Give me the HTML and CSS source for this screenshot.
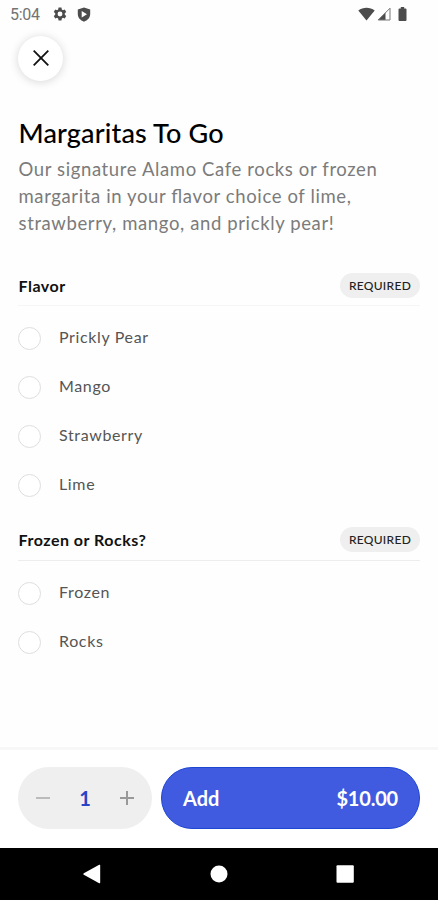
FILE: index.html
```html
<!DOCTYPE html>
<html lang="en">
<head>
<meta charset="utf-8">
<title>Margaritas To Go</title>
<link rel="stylesheet" href="styles.css">
</head>
<body>
<div class="screen">
  <header class="status">
    <span class="time">5:04</span>
    <svg class="gear" width="14" height="14" viewBox="0 0 24 24"><path fill-rule="evenodd" d="M9.500 1h5l.6 3.200 2 1.200 3.100-1.100 2.500 4.300-2.500 2.100v2.600l2.500 2.100-2.500 4.300-3.100-1.100-2 1.200-.6 3.200h-5l-.6-3.200-2-1.200-3.100 1.100-2.500-4.300 2.500-2.100v-2.600L1.300 8.600l2.500-4.300 3.100 1.100 2-1.200zM12 7.800a4.200 4.200 0 1 0 0 8.400 4.200 4.200 0 0 0 0-8.400z"/></svg>
    <svg class="shield" width="14" height="15" viewBox="0 0 14 15"><path fill-rule="evenodd" d="M7 .4 13.200 2.500V7c0 3.600-2.500 6.300-6.200 7.700C3.300 13.300.800 10.600.800 7V2.500zM4.700 4v6.400L10 7.200z"/></svg>
    <span class="spacer"></span>
    <svg class="wifi" width="17" height="14" viewBox="0 0 17 14"><path d="M.3 3.500C5-.2 12-.2 16.700 3.500L8.500 13.500z"/></svg>
    <svg class="signal" width="14" height="14" viewBox="0 0 14 14"><path d="M8.500 5.500V13H.8z"/><path class="thin" d="M1.200 13 13 1.200V13z"/></svg>
    <svg class="battery" width="9" height="14" viewBox="0 0 9 14"><path d="M2.800 0h3.400v1.500h1.300q1 0 1 1V13q0 1-1 1h-6q-1 0-1-1V2.500q0-1 1-1h1.300z"/></svg>
  </header>
  <main>
    <button class="close" aria-label="Close"><svg width="18" height="18" viewBox="0 0 18 18"><path d="M1.700 1.700 16.300 16.300M16.300 1.700 1.700 16.300"/></svg></button>
    <h1>Margaritas To Go</h1>
    <p class="desc">Our signature Alamo Cafe rocks or frozen<br>margarita in your flavor choice of lime,<br>strawberry, mango, and prickly pear!</p>
    <section>
      <div class="head faint"><h2>Flavor</h2><span class="tag">REQUIRED</span></div>
      <ul>
        <li><i class="radio"></i><span>Prickly Pear</span></li>
        <li><i class="radio"></i><span>Mango</span></li>
        <li><i class="radio"></i><span>Strawberry</span></li>
        <li><i class="radio"></i><span>Lime</span></li>
      </ul>
    </section>
    <section>
      <div class="head"><h2>Frozen or Rocks?</h2><span class="tag">REQUIRED</span></div>
      <ul>
        <li><i class="radio"></i><span>Frozen</span></li>
        <li><i class="radio"></i><span>Rocks</span></li>
      </ul>
    </section>
  </main>
  <footer class="order">
    <div class="qty">
      <svg class="minus" width="14" height="14" viewBox="0 0 14 14"><path d="M0 7h14"/></svg>
      <span>1</span>
      <svg class="plus" width="14" height="14" viewBox="0 0 14 14"><path d="M0 7h14M7 0v14"/></svg>
    </div>
    <button class="add"><span>Add</span><span class="price">$10.00</span></button>
  </footer>
  <nav class="nav">
    <svg width="18" height="20" viewBox="0 0 18 20"><path d="M.8 9.200 16.200.8q1-.4 1 .6v17.200q0 1-1 .6L.8 10.800q-1-.8 0-1.600z"/></svg>
    <svg width="18" height="18" viewBox="0 0 18 18"><circle cx="9" cy="9" r="8.500"/></svg>
    <svg width="18" height="18" viewBox="0 0 18 18"><rect x=".5" y=".2" width="17.300" height="17.600" rx="1"/></svg>
  </nav>
</div>
</body>
</html>
```
FILE: styles.css
```css
* { box-sizing: border-box; margin: 0; padding: 0; }
body { background: #fefefe; font-family: Lato, sans-serif; color: #000; }
.screen { width: 438px; height: 900px; display: flex; flex-direction: column; overflow: hidden; }
.status { height: 28px; flex: none; display: flex; align-items: center; padding: 0 31px 0 10px; fill: #4c4c4c; }
.time { font: 400 16px/29px Roboto, sans-serif; color: #737373; width: 43px; letter-spacing: -.3px; }
.shield { margin-left: 10px; }
.spacer { flex: 1; }
.signal { margin-left: 2px; }
.signal .thin { fill: none; stroke: #777; stroke-width: 1; }
.battery { margin-left: 7px; }
main { flex: 1; padding: 8px 18px 0; }
.close { display: flex; align-items: center; justify-content: center; width: 45px; height: 45px; padding-bottom: 1px; border: 0; border-radius: 50%; background: #fff; box-shadow: 0 1px 10px rgba(0,0,0,.16); }
.close svg { fill: none; stroke: #111; stroke-width: 1.8; }
h1 { margin-top: 35px; padding-left: .5px; font-size: 27px; line-height: 34px; font-weight: 500; letter-spacing: .15px; white-space: nowrap; }
.desc { margin-top: 6px; padding-left: .5px; font-size: 18.500px; line-height: 26.800px; letter-spacing: .62px; font-feature-settings: "liga" 1; color: #7b7b7b; white-space: nowrap; }
section { margin-top: 30px; }
section + section { margin-top: 11px; }
.head { height: 40px; display: flex; align-items: center; justify-content: space-between; border-bottom: 1px solid #ededed; }
.head.faint { border-color: #f5f5f5; }
h2 { padding: 0 0 1px .5px; font-size: 16px; font-weight: 700; letter-spacing: .5px; color: #111; }
.tag { width: 80px; height: 25px; border-radius: 13px; background: #efefef; font-size: 12px; line-height: 25px; font-weight: 500; letter-spacing: .3px; text-align: center; color: #222; }
section + section h2 { padding-bottom: 3px; }
section + section .tag { margin-bottom: 2px; }
ul { list-style: none; padding-top: 8px; }
li { height: 49px; display: flex; align-items: center; gap: 18px; font-size: 16px; letter-spacing: .64px; color: #555; }
li span { padding-bottom: 4px; }
section + section .radio { margin-bottom: 1px; }
.radio { width: 23px; height: 23px; border: 1.500px solid #dedede; border-radius: 50%; background: #fff; }
.order { flex: none; height: 101px; border-top: 3px solid #f7f7f7; display: flex; align-items: flex-start; gap: 9px; padding: 17px 18px 0; background: #fff; }
.qty { width: 134px; height: 62px; border-radius: 31px; background: #efefef; display: flex; align-items: center; justify-content: space-between; padding: 0 18px; font-size: 20px; font-weight: 700; color: #2744c8; }
.qty svg { fill: none; stroke: #999; stroke-width: 2; }
.qty .minus { stroke: #bbb; }
.add { flex: 1; height: 62px; border: 1px solid #1e46d2; border-radius: 31px; background: #405be0; display: flex; align-items: center; justify-content: space-between; padding: 0 21px; font: 700 20px Lato, sans-serif; color: #fff; }
.price { letter-spacing: -.2px; }
.nav { flex: none; height: 52px; background: #000; fill: #fff; display: flex; align-items: center; justify-content: space-between; padding: 0 84px 0 83px; }
```
